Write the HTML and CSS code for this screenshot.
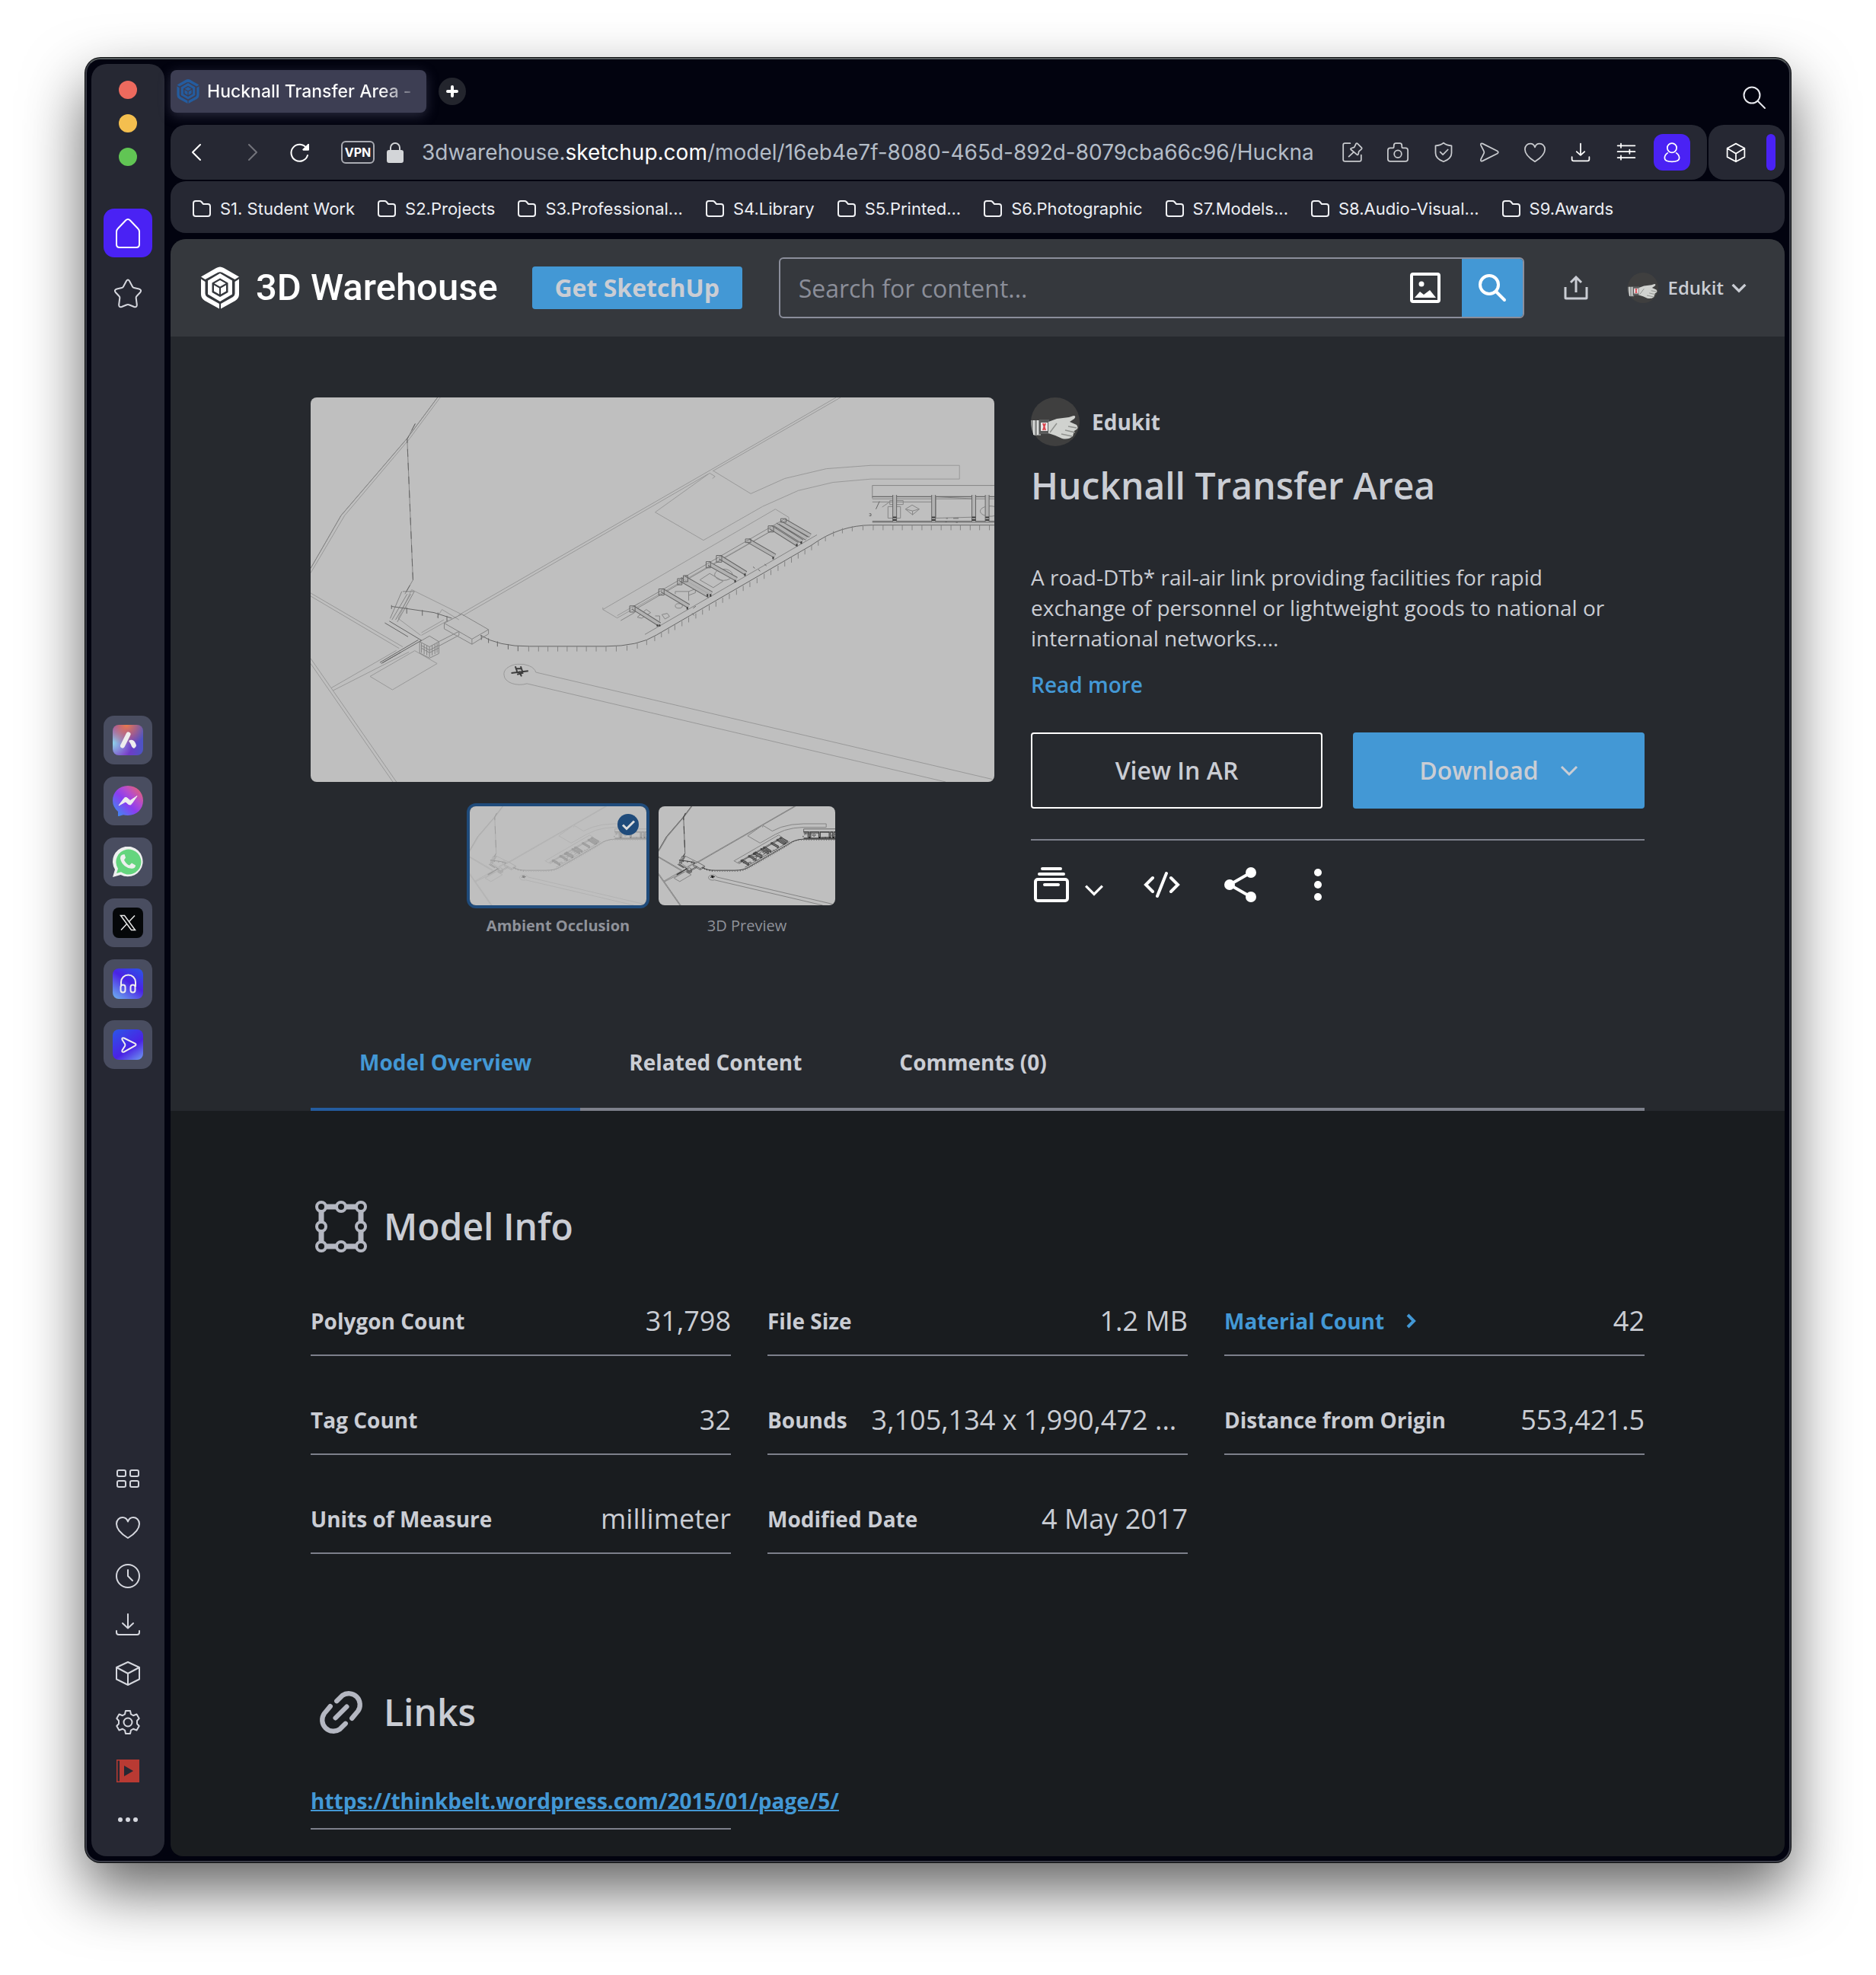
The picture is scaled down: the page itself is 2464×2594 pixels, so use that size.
FILE: index.html
```html
<!DOCTYPE html>
<html lang="en">
<head>
<meta charset="utf-8">
<title>Hucknall Transfer Area - 3D Warehouse</title>
<meta name="viewport" content="width=device-width, initial-scale=1">
<link rel="stylesheet" href="styles.css">
</head>
<body>
<svg class="defs" aria-hidden="true">
  <symbol id="folder" viewBox="0 0 26 24"><path d="M2 5v14q0 3 3 3h16q3 0 3-3V9q0-3-3-3h-6L12.500 3Q11.500 2 10 2H5Q2 2 2 5z"/></symbol>
  <symbol id="chevron-down" viewBox="0 0 24 16"><path d="M2 3l10 10L22 3"/></symbol>
  <symbol id="heart" viewBox="0 0 32 32"><path d="M16 30C12 27.500 1 21 1 11.500 1 6 5 3 9 3c3.500 0 6 2.500 7 5.500C17 5.500 19.500 3 23 3c4 0 8 3 8 8.500C31 21 20 27.500 16 30z"/></symbol>
  <symbol id="download" viewBox="0 0 32 32"><path d="M16 2v18M9 14l7 6.500 7-6.500M1 24v2q0 3 3 3h24q3 0 3-3v-2"/></symbol>
  <symbol id="cube" viewBox="0 0 32 32"><path d="M16 1l15 7v15.500L16 31 1 23.500V8zM1 8l15 8 15-8M16 16v15"/></symbol>
  <symbol id="send" viewBox="0 0 32 32"><path d="M6 3L28 14q3 2 0 4L6 29q-3.500 1-2.500-2.500L8 17.500q.8-1.500 0-3L3.500 5.500Q2.500 2 6 3z"/></symbol>
  <symbol id="logo" viewBox="0 0 50 55">
    <path d="M0 13L20 1.500q5-3 10 0L50 13l-5.500 3.500L28 7.500q-3-1.500-6 0L5.500 16.500z"/>
    <path d="M0 16l5.500 3.500V35q0 3 2.500 4.500L24 48.500V55L5 44.500Q0 41.500 0 36z"/>
    <path d="M50 16l-5.500 3.500V35q0 3-2.500 4.500L26 48.500V55l19-10.500q5-3 5-8.500z"/>
    <path fill-rule="evenodd" d="M25 8.500L41 18v18L25 45.500 9 36V18zM25 15l-10.500 6v12.500L25 39.500l10.500-6V21z"/>
    <path d="M25 17.500l7.500 4.200L25 26l-7.500-4.300zM17 24l7 4v8l-7-4zM33 24l-7 4v8l7-4z"/>
  </symbol>
  <symbol id="hand" viewBox="0 0 64 64">
    <circle cx="32" cy="32" r="32" fill="#3f3f3f"/>
    <path d="M0 30h13v20H4Q0 42 0 30z" fill="#8d8f8e"/>
    <path d="M4 30v19M9 30v19" stroke="#dcdedd" stroke-width="2"/>
    <path d="M11 29h13v19H11z" fill="#5a5b5b"/><path d="M13 33h9v11h-9z" fill="#e9e5e6"/>
    <path d="M16 34l3 9M19 34l-3 9" stroke="#d8434c" stroke-width="2"/>
    <path d="M23 32l11-4 16-2 6-2q4 0 1 4l-6 4 9 4q3 4 0 6l-3 2-2 7q-6 5-14 3l-9-4-9-3z" fill="#d0d2cf"/>
    <path d="M49 38l11 2M45 43l13 3M40 48l14 3M34 34l-9 12" stroke="#8f918e" stroke-width="1.500" fill="none"/>
  </symbol>
  <symbol id="plan" viewBox="14 36 1530 1494" preserveAspectRatio="none">
    <g class="plan-faint">
      <path d="M298 36L230 195 82 495 14 700M304 36L236 195 90 495 14 718"/>
      <path d="M1190 36L905 322 345 882M1200 36L914 322M903 334L355 884"/>
      <path d="M907 330l12 13-6 8M907 330L785 482l108 109 132-131 80-62 78-32 85-13h198v-53h-198l-100 13-93 38-76 59-84-89"/>
      <path d="M668 860L1054 470l30 32v14L700 893zM668 852v8M700 884l50-50"/>
      <path d="M14 796l206 209M14 808l198 203M14 1050l46 115 146 365M14 1070l184 460M60 1165l146-146M64 1175l170-150M262 950l50-50M262 960l60-58"/>
      <path d="M297 1070L197 1172l-50-52 100-100zM240 783l112 96M240 783l-30 112 50 65M308 860l38 40M297 890l11-30"/>
      <path d="M447 1116a35 37 0 0 1 71-12L1540 1520M447 1116a35 37 0 0 0 51 32L1435 1530"/>
    </g>
    <g class="plan-mid">
      <path d="M298 36L230 195 82 495 14 700M248 138l-18 60 13 547-18 55"/>
      <path d="M352 878l60 60v17l-37 40-62-60v-22zM412 938l-37 37v20M375 975l-62-62"/>
      <path d="M258 985l22-22 21 22v46l-21 18-22-20zM258 985l22 20 21-20M280 1005v40M262 1000l18 18 20-18M262 1010l18 18 20-18M262 990v38M268 996v38M274 1000v38M286 1000v38M292 995v38M297 990v38"/>
      <path d="M301 985l45-40v15l-45 42M220 790h26l-38 118M218 790l-26 105M230 800l-34 100M238 800l-34 100"/>
      <path d="M735 850L1075 508M735 865l340-340M708 903l30-30M762 957l385-387"/>
      <path d="M885 745l22-25 30 30-22 25zM830 800v-10h30v35M745 890l20-30 10 12-20 22zM785 885h10v20M800 880l12-5 5 12-10 10zM860 790l15-10v15l-15 10z"/>
      <ellipse cx="938" cy="725" rx="20" ry="22"/><ellipse cx="838" cy="846" rx="8" ry="9"/>
      <path d="M1544 378h-273v50M1271 421h273M1271 430h273M1271 442h135M1310 437h30v15h-30zM1306 460h28v45h-28zM1345 470l15-16 16 16-15 22zM1345 470l16 7 15-7M1361 477v15M1413 421v84l86-4M1413 422l86 8M1293 462l15-18"/>
      <path d="M1544 460a22 20 0 1 0 0 36"/>
    </g>
    <g class="plan-dark">
      <path d="M248 138l-18 60 13 547-18 55" stroke-dasharray="10 8"/>
      <path d="M180 912l52 54M190 905l72 75-88 88M255 978l-86 88M172 1070l44-44"/>
      <path d="M195 848l95 24 40 22M195 843v15M229 852v24M264 862v22M299 872v22M319 885v20"/>
      <path d="M1271 517h273M1271 521h273M1271 422h273"/>
      <path d="M394 960q40 44 110 43h170q74 0 114-44L1135 610q62-78 135-78h274"/>
      <path d="M396 960v18M412 972v18M432 984v20M456 995v20M478 1002v20"/>
      <path d="M1279 470l8-30M1264 488h4v8h-4M1436 506h4M1434 519h4M1452 506h12M1458 522h4M868 875l4 8M870 855l6-8M1004 694l4 6M1016 705l4 6M1030 684l4 6"/>
    </g>
    <g class="plan-ticks">
      <path d="M502 1003v20M524 1003v20M545 1003v20M567 1003v20M588 1003v20M610 1003v20M631 1003v20M653 1003v20M675 1003v20M698 1003v20M722 1000v20M745 992v20M766 978v20M784 963v20M799 948v20M815 934v20M829 920v20M845 905v20M860 890v20M876 875v20M891 860v20M906 844v20M921 829v20M936 814v20M951 799v20M967 783v20M982 768v20M997 753v20M1013 738v20M1029 721v20M1044 706v20M1060 690v20M1075 673v20M1090 658v20M1105 642v20M1120 626v20M1135 610v20M1150 592v20M1166 575v20M1184 556v20M1204 544v20M1226 536v20M1250 532v20M1273 532v20M1295 532v20M1317 532v20M1338 532v20M1360 532v20M1382 532v20M1403 532v20M1425 532v20M1447 532v20M1468 532v20M1490 532v20M1511 532v20M1533 532v20"/>
    </g>
    <g class="plan-beam">
      <path d="M735 852l60 66M800 785l60 62M841 742l66 66M849 736l62 62M905 682l62 60M930 657l58 62M993 592l60 60M1043 540l60 66M1054 530l60 66M1064 522l60 62M1074 515l58 58M1321 415v104M1408 415v104M1498 415v104M1528 415v104"/>
    </g>
    <g class="plan-beam-core">
      <path d="M735 852l60 66M800 785l60 62M841 742l66 66M849 736l62 62M905 682l62 60M930 657l58 62M993 592l60 60M1043 540l60 66M1054 530l60 66M1064 522l60 62M1074 515l58 58M1321 415v104M1408 415v104M1498 415v104M1528 415v104"/>
    </g>
    <g class="plan-dark">
      <path d="M728 846h12v24h-12zM793 780h12v24h-12zM835 740h10v24h-10zM848 728h10v24h-10zM899 674h10v24h-10zM922 650h12v26h-12zM987 586h12v14h-12zM1038 535h12v24h-12zM1066 507h12v14h-12z"/>
    </g>
    <g class="plan-black">
      <path d="M472 1081l4 20M484 1081l4 20M474 1090h12M463 1107l38-8M480 1100l6 20M476 1112l14-6"/>
      <path d="M790 918v8M795 918v8M857 850v10M902 800v10M909 800v10M964 745v10M986 720v10M1049 655v10M1102 605v10M1112 595v10M1317 502h8M1317 512h8M1404 502h8M1404 512h8M1494 502h8M1494 512h8M1524 502h8M1524 512h8"/>
    </g>
  </symbol>
</svg>

<div class="window">
  <nav class="rail" aria-label="Browser sidebar">
    <div class="rail-top">
      <div class="lights"><span class="light light-red"></span><span class="light light-amber"></span><span class="light light-green"></span></div>
      <button class="rail-btn rail-home" aria-label="Home"><svg class="ic" viewBox="0 0 32 40"><path d="M13 3.500q3-3 6 0L29 14q2 2 2 4.500V35q0 4-4 4H5q-4 0-4-4V18.500Q1 16 3 14z"/></svg></button>
      <button class="rail-btn" aria-label="Pinboards"><svg class="ic ic-star" viewBox="0 0 36 40"><path d="M16 3q2-3 4 0l4 7.500q.6 1.200 2 1.500l6.500 1.500q4 1.200 1.700 4.500L29.500 23q-1 1-.8 2.500l1.100 8.500q.2 4-3.600 3L20 34.500q-2-.8-4 0L9.800 37q-3.800 1-3.600-3l1.100-8.500Q7.500 24 6.500 23L1.800 18q-2.300-3.300 1.700-4.500L10 12q1.400-.3 2-1.500z"/></svg></button>
    </div>
    <div class="rail-apps">
      <button class="tile" aria-label="Aria"><span class="app app-aria"><svg viewBox="0 0 40 40"><path d="M20.500 12.500L13 27.500" stroke="#eee" stroke-width="6" stroke-linecap="round"/><path d="M21 21q7-4 10 6 0 2-3 4-3-1-4-5-1-2-3-5z" fill="#eee"/></svg></span></button>
      <button class="tile" aria-label="Messenger"><span class="app"><svg viewBox="0 0 40 40"><defs><linearGradient id="mg" x1="0" y1="1" x2="1" y2="0"><stop offset="0" stop-color="#2f9bf0"/><stop offset=".45" stop-color="#8a3df0"/><stop offset=".65" stop-color="#b44bd0"/><stop offset="1" stop-color="#f26a55"/></linearGradient></defs><path d="M20 0c11.500 0 20 8.300 20 19.500S31.500 39 20 39q-3.500 0-6-.8L8 40q-1 .3-1-1v-5Q0 28 0 19.500C0 8.300 8.500 0 20 0z" fill="url(#mg)"/><path d="M8 26l7-9.500q1.500-2 4-.5l4 3.500 9-6-7 10q-1.500 2.500-4 1l-4-3.500z" fill="#eee" stroke="#eee" stroke-linejoin="round"/></svg></span></button>
      <button class="tile" aria-label="WhatsApp"><span class="app"><svg viewBox="0 0 40 40"><path d="M0 40l3-10A19.800 19.800 0 1 1 10.500 37z" fill="#eef0ef"/><path d="M5 35l2-6A16.500 16.500 0 1 1 11 33.300z" fill="#64d57e"/><path d="M13 10.500q-3 1-3 5 1 6 6 10t11 3q3-1 3-4l-5-3-3 3q-4-1-7-7l2-3-1.500-4.500z" fill="#eef0ef"/></svg></span></button>
      <button class="tile" aria-label="X"><span class="app app-x"><svg viewBox="0 0 40 40" fill="none" stroke="#e8e8e8" stroke-width="1.500"><path d="M10.500 10.500h5L29.500 29.500h-5zM29 10.500l-8 8.500M11 29.500l8-8.500"/></svg></span></button>
      <button class="tile" aria-label="Player"><span class="app app-player"><svg viewBox="0 0 40 40" fill="none" stroke="#eee" stroke-width="2"><path d="M11 24v-6a9.500 9.500 0 0 1 19 0v6"/><rect x="10.500" y="21.500" width="6" height="10" rx="3"/><rect x="23.500" y="21.500" width="6" height="10" rx="3"/></svg></span></button>
      <button class="tile" aria-label="Flow"><span class="app app-flow"><svg viewBox="0 0 40 40" fill="none" stroke="#eee" stroke-width="2"><path d="M15 11.500l14.500 7q2 1.500 0 3L15 29.500q-3.500 1-2.500-2L16 22q.8-1.500 0-3l-3.500-5.500q-1-3 2.500-2z"/></svg></span></button>
    </div>
    <div class="rail-bottom">
      <button class="rail-btn" aria-label="Workspaces"><svg class="ic" viewBox="0 0 32 32"><rect x="2" y="5" width="11" height="8" rx="2"/><rect x="19" y="5" width="11" height="8" rx="2"/><rect x="2" y="19" width="11" height="8" rx="2"/><rect x="19" y="19" width="11" height="8" rx="2"/></svg></button>
      <button class="rail-btn" aria-label="Bookmarks"><svg class="ic"><use href="#heart"/></svg></button>
      <button class="rail-btn" aria-label="History"><svg class="ic" viewBox="0 0 32 32"><circle cx="16" cy="16" r="15"/><path d="M16 8v8l6 6"/></svg></button>
      <button class="rail-btn" aria-label="Downloads"><svg class="ic"><use href="#download"/></svg></button>
      <button class="rail-btn" aria-label="Extensions"><svg class="ic"><use href="#cube"/></svg></button>
      <button class="rail-btn" aria-label="Settings"><svg class="ic" viewBox="0 0 32 32"><path d="M13 1h6l1 4.500 3 1.700L27.500 5.500l3.200 5.500L28 14v4l2.700 3-3.200 5.500-4.500-1.700-3 1.700L19 31h-6l-1-4.500-3-1.700-4.500 1.700L1.300 21 4 18v-4L1.300 11l3.200-5.500L9 7.200l3-1.700z"/><circle cx="16" cy="16" r="5.500"/></svg></button>
      <button class="rail-btn" aria-label="Video"><svg class="ic-solid" viewBox="0 0 32 32"><path d="M1 1h30v30H1z" fill="#b93a33"/><path d="M2.500 2.500h2.500v27H2.500zM11 9l12 7-12 7z" fill="#262833"/></svg></button>
      <button class="rail-btn" aria-label="More"><svg class="ic-solid" viewBox="0 0 32 32" fill="#d5d7de"><circle cx="6" cy="16" r="3"/><circle cx="16" cy="16" r="3"/><circle cx="26" cy="16" r="3"/></svg></button>
    </div>
  </nav>

  <div class="browser">
    <div class="tabstrip">
      <div class="tab"><svg class="favicon"><use href="#logo"/></svg><span class="tab-title">Hucknall Transfer Area -</span></div>
      <button class="new-tab" aria-label="New tab"><svg viewBox="0 0 36 36"><path d="M18 12v12M12 18h12" stroke="#fff" stroke-width="4" stroke-linecap="round"/></svg></button>
      <button class="tab-search" aria-label="Search tabs"><svg class="ic" viewBox="0 0 32 32"><circle cx="13" cy="13" r="10.500"/><path d="M21 21l9 9"/></svg></button>
    </div>

    <div class="toolbar-row">
      <div class="toolbar">
        <button class="nav-btn nav-back" aria-label="Back"><svg class="ic" viewBox="0 0 32 32"><path d="M21 6L11 16l10 10"/></svg></button>
        <button class="nav-btn nav-forward" aria-label="Forward" disabled><svg class="ic" viewBox="0 0 32 32"><path d="M11 6l10 10-10 10"/></svg></button>
        <button class="nav-btn nav-reload" aria-label="Reload"><svg class="ic" viewBox="0 0 32 32"><path d="M26 20a11 11 0 1 1-1.500-9.500M27 6v6.500h-6.500"/><path d="M27 6v6.500h-6.500z" fill="#fff"/></svg></button>
        <button class="vpn">VPN</button>
        <svg class="lock" viewBox="0 0 22 28"><rect y="11" width="22" height="17" rx="3" fill="#d3d5d8"/><path d="M5 12V8a6 6 0 0 1 12 0v4" fill="none" stroke="#d3d5d8" stroke-width="2"/></svg>
        <div class="url">3dwarehouse.<b>sketchup.com</b>/model/16eb4e7f-8080-465d-892d-8079cba66c96/Huckna</div>
        <div class="tools">
          <button class="tool dim" aria-label="Easy files"><svg class="ic" viewBox="0 0 32 32"><path d="M13 2.500H5Q2.500 2.500 2.500 5v22q0 2.500 2.500 2.500h22q2.500 0 2.500-2.500v-7M22 2.800q1-.8 2 .1l6 6q1 1 0 2.300l-4 3.500-.8 4q-.5 2-2 .8l-9-7.500q-1.200-1.200.5-2l4.500-1.500zM17.500 16.500L11 22.500"/></svg></button>
          <button class="tool dim" aria-label="Snapshot"><svg class="ic" viewBox="0 0 32 32"><path d="M1 13q0-3.500 3.500-3.500h4Q10 9.500 10 8V6q0-3.500 3-3.500h6q3 0 3 3.500v2q0 1.500 1.500 1.500h4Q31 9.500 31 13v13q0 3.500-3.500 3.500h-23Q1 29.500 1 26z"/><circle cx="16" cy="18.500" r="5.500"/></svg></button>
          <button class="tool dim" aria-label="Ad blocker"><svg class="ic" viewBox="0 0 32 32"><path d="M16 2q5 4 12 4v11q0 8.500-12 13Q4 25.500 4 17V6q7 0 12-4z"/><path d="M11 15.500l4 4 7.500-7.500"/></svg></button>
          <button class="tool dim" aria-label="Send"><svg class="ic"><use href="#send"/></svg></button>
          <button class="tool dim" aria-label="Favourite"><svg class="ic"><use href="#heart"/></svg></button>
          <button class="tool" aria-label="Downloads"><svg class="ic" viewBox="0 0 32 32"><path d="M16 3v17M10 15l6 5.500 6-5.500M3 23v3.500q0 2.500 2.500 2.500h21q2.500 0 2.500-2.500V23"/></svg></button>
          <button class="tool" aria-label="Easy setup"><svg class="ic" viewBox="0 0 32 32"><path d="M3 6h26M3 15h26M3 24h26M8 3v6M21 12v6M8 21v6"/></svg></button>
          <button class="tool tool-user" aria-label="Profile"><svg class="ic" viewBox="0 0 32 32"><circle cx="16" cy="9.500" r="7"/><path d="M9.500 17Q5 20 5 24.500 5 30 16 30t11-5.500Q27 20 22.500 17"/></svg></button>
        </div>
      </div>
      <div class="ext"><button class="tool" aria-label="Extensions"><svg class="ic" viewBox="0 0 32 32"><path d="M16 3l13 7v13l-13 7-13-7V10zM3 10l13 8 13-8M16 18v12"/></svg></button><span class="ext-bar"></span></div>
    </div>

    <nav class="bookmarks" aria-label="Bookmarks">
      <a class="bookmark" href="#"><svg class="folder"><use href="#folder"/></svg>S1. Student Work</a>
      <a class="bookmark" href="#"><svg class="folder"><use href="#folder"/></svg>S2.Projects</a>
      <a class="bookmark" href="#"><svg class="folder"><use href="#folder"/></svg>S3.Professional...</a>
      <a class="bookmark" href="#"><svg class="folder"><use href="#folder"/></svg>S4.Library</a>
      <a class="bookmark" href="#"><svg class="folder"><use href="#folder"/></svg>S5.Printed...</a>
      <a class="bookmark" href="#"><svg class="folder"><use href="#folder"/></svg>S6.Photographic</a>
      <a class="bookmark" href="#"><svg class="folder"><use href="#folder"/></svg>S7.Models...</a>
      <a class="bookmark" href="#"><svg class="folder"><use href="#folder"/></svg>S8.Audio-Visual...</a>
      <a class="bookmark" href="#"><svg class="folder"><use href="#folder"/></svg>S9.Awards</a>
    </nav>

    <div class="page">
      <header class="site-header">
        <a class="brand" href="#"><svg class="brand-mark"><use href="#logo"/></svg>3D Warehouse</a>
        <button class="get">Get SketchUp</button>
        <form class="search">
          <input class="search-input" type="text" placeholder="Search for content..." aria-label="Search for content">
          <button class="search-image" type="button" aria-label="Search by image"><svg viewBox="0 0 40 40"><path fill-rule="evenodd" fill="#fff" d="M4 0h32q4 0 4 4v32q0 4-4 4H4q-4 0-4-4V4q0-4 4-4zM4 4v32h32V4z"/><circle cx="15" cy="15" r="3.500" fill="#fff"/><path d="M6 33l7-8 5 4 8-6 8 10z" fill="#fff"/></svg></button>
          <button class="search-go" type="submit" aria-label="Search"><svg viewBox="0 0 40 40" fill="none" stroke="#fff" stroke-width="4" stroke-linecap="round"><circle cx="16" cy="16" r="12"/><path d="M25 25l11 11"/></svg></button>
        </form>
        <button class="upload" aria-label="Upload"><svg viewBox="0 0 32 32" fill="none" stroke="#c9ccd3" stroke-width="3"><path d="M16 22V3M9 9l7-7 7 7M2 15v14q0 1 1 1h26q1 0 1-1V15"/></svg></button>
        <button class="account"><svg class="account-pic"><use href="#hand"/></svg>Edukit<svg class="account-chev"><use href="#chevron-down"/></svg></button>
      </header>

      <section class="hero">
        <div class="hero-grid">
          <div class="gallery">
            <svg class="preview" role="img" aria-label="Model preview"><use href="#plan"/></svg>
            <div class="thumbs">
              <button class="thumb thumb-on"><span class="thumb-frame"><svg class="thumb-pic thumb-soft"><use href="#plan"/></svg><svg class="check" viewBox="0 0 28 28"><circle cx="14" cy="14" r="14" fill="#1f4b7b"/><path d="M7 14.500l5 5 10-10" fill="none" stroke="#ddd" stroke-width="3"/></svg></span>Ambient Occlusion</button>
              <button class="thumb"><span class="thumb-frame"><svg class="thumb-pic thumb-hard"><use href="#plan"/></svg></span>3D Preview</button>
            </div>
          </div>
          <div class="details">
            <a class="author" href="#"><svg class="author-pic"><use href="#hand"/></svg>Edukit</a>
            <h1 class="title">Hucknall Transfer Area</h1>
            <p class="desc">A road-DTb* rail-air link providing facilities for rapid exchange of personnel or lightweight goods to national or international networks....</p>
            <a class="more" href="#">Read more</a>
            <div class="actions">
              <button class="btn btn-outline">View In AR</button>
              <button class="btn btn-fill">Download<svg class="btn-chev"><use href="#chevron-down"/></svg></button>
            </div>
            <div class="icons">
              <button class="icon-btn icon-collect" aria-label="Add to collection"><svg class="i-collect" viewBox="0 0 46 46"><rect x="2" y="16" width="42" height="28" rx="3" fill="none" stroke="#fff" stroke-width="4"/><path d="M7 9h32M11 2h24M14 23h18" stroke="#fff" stroke-width="4" stroke-linecap="round"/></svg><svg class="i-chev"><use href="#chevron-down"/></svg></button>
              <button class="icon-btn icon-code" aria-label="Embed"><svg class="i-wide" viewBox="0 0 48 36" fill="none" stroke="#fff" stroke-width="4" stroke-linecap="round"><path d="M12 9l-9 9 9 9M36 9l9 9-9 9M30 3L18 33"/></svg></button>
              <button class="icon-btn icon-share" aria-label="Share"><svg class="i-share" viewBox="0 0 42 46"><path d="M35 7L7 23l28 16" fill="none" stroke="#fff" stroke-width="4"/><circle cx="35" cy="7" r="7" fill="#fff"/><circle cx="7" cy="23" r="7" fill="#fff"/><circle cx="35" cy="39" r="7" fill="#fff"/></svg></button>
              <button class="icon-btn" aria-label="More options"><svg class="i-dots" viewBox="0 0 10 42" fill="#fff"><circle cx="5" cy="5" r="5"/><circle cx="5" cy="21" r="5"/><circle cx="5" cy="37" r="5"/></svg></button>
            </div>
          </div>
        </div>
        <nav class="tabs" aria-label="Model sections">
          <a class="tab-link tab-on" href="#">Model Overview</a>
          <a class="tab-link" href="#">Related Content</a>
          <a class="tab-link" href="#">Comments (0)</a>
        </nav>
      </section>

      <main class="body">
        <h2 class="heading"><svg class="heading-ic" viewBox="0 0 80 80" fill="none" stroke="#b4b7c1"><path d="M14 14h52v52H14z" stroke-width="7"/><g fill="#191c1f" stroke-width="4"><circle cx="14" cy="14" r="6"/><circle cx="40" cy="14" r="6"/><circle cx="66" cy="14" r="6"/><circle cx="14" cy="40" r="6"/><circle cx="66" cy="40" r="6"/><circle cx="14" cy="66" r="6"/><circle cx="40" cy="66" r="6"/><circle cx="66" cy="66" r="6"/></g></svg>Model Info</h2>
        <dl class="facts">
          <div class="fact"><dt>Polygon Count</dt><dd>31,798</dd></div>
          <div class="fact"><dt>File Size</dt><dd>1.2 MB</dd></div>
          <div class="fact"><dt><a class="fact-link" href="#">Material Count<svg class="fact-chev" viewBox="0 0 14 22"><path d="M3 3l8 8-8 8"/></svg></a></dt><dd>42</dd></div>
          <div class="fact"><dt>Tag Count</dt><dd>32</dd></div>
          <div class="fact fact-long"><dt>Bounds</dt><dd>3,105,134 x 1,990,472 ...</dd></div>
          <div class="fact"><dt>Distance from Origin</dt><dd>553,421.5</dd></div>
          <div class="fact"><dt>Units of Measure</dt><dd>millimeter</dd></div>
          <div class="fact"><dt>Modified Date</dt><dd>4 May 2017</dd></div>
        </dl>
        <h2 class="heading heading-links"><svg class="heading-ic" viewBox="2 2 76 76" fill="none" stroke="#b4b7c1" stroke-width="6" stroke-linecap="round"><path d="M33 47L47 33M34.500 26l7-7a14 14 0 0 1 19.500 19.500l-7.500 9M26.500 32.500L19 41.500a14 14 0 0 0 19.500 19.500l7-7"/></svg>Links</h2>
        <div class="links"><div class="link-cell"><a class="ext-link" href="https://thinkbelt.wordpress.com/2015/01/page/5/">https://thinkbelt.wordpress.com/2015/01/page/5/</a></div></div>
      </main>
    </div>
  </div>
</div>
</body>
</html>
```
FILE: styles.css
```css
* { box-sizing: border-box; }

body {
  margin: 0;
  min-height: 100vh;
  display: flex;
  padding: 76px 112px 148px;
  background: #fff;
  font-family: "Open Sans", sans-serif;
  color: #cacdd4;
}

button {
  margin: 0;
  padding: 0;
  border: 0;
  background: none;
  color: inherit;
  font: inherit;
  cursor: pointer;
}

a { color: inherit; text-decoration: none; }
svg { display: block; flex: none; }
.defs { position: absolute; width: 0; height: 0; }

.ic {
  width: 32px;
  height: 32px;
  fill: none;
  stroke: currentColor;
  stroke-width: 2;
  stroke-linejoin: round;
  stroke-linecap: round;
}
.ic-solid { width: 32px; height: 32px; }

/* Browser window */
.window {
  flex: 1;
  min-width: 0;
  display: flex;
  gap: 8px;
  padding: 6px;
  border: 2px solid #3b3d47;
  border-top-color: #565c5d;
  border-radius: 20px;
  background: #02030f;
  box-shadow: 0 0 0 1px #0a0c0d, 0 36px 80px rgba(0, 0, 0, .62);
}

.rail {
  flex: none;
  width: 96px;
  display: flex;
  flex-direction: column;
  justify-content: space-between;
  align-items: center;
  padding: 22px 0 16px;
  border-radius: 20px;
  background: #262833;
  color: #d5d7de;
}
.rail-top { display: flex; flex-direction: column; align-items: center; gap: 16px; padding-bottom: 16px; }
.lights { display: flex; flex-direction: column; gap: 20px; margin-bottom: 40px; }
.light { width: 24px; height: 24px; border-radius: 50%; }
.light-red { background: #ed6a5e; }
.light-amber { background: #f4bf4f; }
.light-green { background: #61c554; }
.rail-btn { width: 64px; height: 64px; display: flex; align-items: center; justify-content: center; }
.rail-home { border-radius: 14px; background: #4a22f4; color: #fff; }
.rail-home .ic { height: 40px; }
.ic-star { width: 36px; height: 40px; }
.rail-apps { display: flex; flex-direction: column; gap: 16px; }
.rail-bottom { display: flex; flex-direction: column; }
.tile {
  width: 64px;
  height: 64px;
  display: flex;
  align-items: center;
  justify-content: center;
  border-radius: 14px;
  background: #494d60;
}
.app { width: 40px; height: 40px; border-radius: 8px; }
.app-aria {
  background:
    radial-gradient(circle at 45% 0, #e77c4c, transparent 60%),
    radial-gradient(circle at 0 60%, #8ed4e8, transparent 55%),
    linear-gradient(90deg, #7b33c8 40%, #4b55c4);
}
.app-x { background: #050709; }
.app-player { background: linear-gradient(35deg, #6fb4f0, #4a22e4 55%, #2b57e8); }
.app-flow { background: linear-gradient(145deg, #2b57e8, #4a22e4 60%, #6f9cf0); }

.browser { flex: 1; min-width: 0; display: flex; flex-direction: column; }

.tabstrip {
  display: flex;
  align-items: center;
  padding: 8px 24px 16px 0;
  font-family: Inter, sans-serif;
}
.tab {
  width: 336px;
  height: 56px;
  display: flex;
  align-items: center;
  gap: 10px;
  padding: 0 8px;
  border-radius: 8px;
  background: #3d3e53;
  box-shadow: 0 4px 16px rgba(90, 90, 120, .45);
}
.favicon { width: 30px; height: 32px; fill: #245c9f; }
.tab-title {
  white-space: nowrap;
  font-size: 23px;
  line-height: 32px;
  font-weight: 500;
  background: linear-gradient(90deg, #fff 85%, #6d6e7e);
  -webkit-background-clip: text;
  background-clip: text;
  color: transparent;
}
.new-tab { width: 36px; height: 36px; margin-left: 16px; border-radius: 50%; background: #23252d; }
.tab-search { align-self: flex-end; margin-left: auto; height: 40px; display: flex; align-items: center; color: #e8e9ee; }

.toolbar-row { display: flex; gap: 2px; }
.toolbar {
  flex: 1;
  min-width: 0;
  height: 72px;
  display: flex;
  align-items: center;
  padding: 0 22px 0 18px;
  border-radius: 20px;
  background: #262833;
  font-family: Inter, sans-serif;
  color: #fff;
}
.nav-back { margin-right: 42px; }
.nav-forward { margin-right: 30px; opacity: .35; }
.nav-reload { margin-right: 38px; }
.vpn {
  width: 44px;
  height: 30px;
  margin-right: 16px;
  border: 2px solid #a9abb2;
  border-radius: 6px;
  font-size: 16px;
  line-height: 26px;
  font-weight: 700;
}
.lock { width: 22px; height: 28px; margin-right: 24px; }
.url {
  flex: 1;
  white-space: nowrap;
  font-size: 28px;
  line-height: 40px;
  color: #b3bcc7;
}
.url b { font-weight: 400; color: #fff; }
.tools { display: flex; gap: 12px; margin-left: 16px; }
.tool { width: 48px; height: 48px; display: flex; align-items: center; justify-content: center; color: #fff; }
.dim { color: #c9cbcf; }
.tool .ic { width: 28px; height: 28px; }
.tool-user { border-radius: 12px; background: #4a22f4; }
.ext {
  width: 100px;
  display: flex;
  align-items: center;
  justify-content: space-between;
  padding: 0 12px;
  border-radius: 20px;
  background: #262833;
}
.ext-bar { width: 12px; height: 48px; border-radius: 6px; background: #4a22f4; }

.bookmarks {
  height: 68px;
  display: flex;
  align-items: center;
  gap: 29px;
  margin: 2px 0 8px;
  padding: 4px 28px 0;
  border-radius: 20px;
  background: #262833;
  overflow: hidden;
  font-family: Inter, sans-serif;
  font-size: 22px;
  line-height: 32px;
  color: #eceef3;
}
.bookmark { display: flex; align-items: center; gap: 11px; white-space: nowrap; }
.folder { width: 26px; height: 24px; fill: none; stroke: #f1f2f5; stroke-width: 2; stroke-linejoin: round; }

/* Web page */
.page {
  flex: 1;
  display: flex;
  flex-direction: column;
  overflow: hidden;
  border-radius: 20px 20px 16px 16px;
  background: #191c1f;
}
.site-header {
  height: 128px;
  display: flex;
  align-items: center;
  padding: 0 50px 0 40px;
  background: #35383d;
}
.brand {
  display: flex;
  align-items: center;
  gap: 22px;
  font-family: Roboto, sans-serif;
  font-size: 49px;
  line-height: 56px;
  font-weight: 500;
  color: #fff;
  white-space: nowrap;
}
.brand-mark { width: 50px; height: 56px; fill: #fff; }
.get {
  width: 276px;
  height: 56px;
  margin: 0 48px 0 45px;
  border-radius: 4px;
  background: #4398d5;
  font-size: 32px;
  line-height: 56px;
  font-weight: 700;
}
.search {
  flex: 1;
  height: 80px;
  display: flex;
  align-items: center;
  overflow: hidden;
  border: 2px solid #8b8e9b;
  border-radius: 6px;
}
.search-input {
  flex: 1;
  min-width: 0;
  height: 76px;
  padding: 0 24px;
  border: 0;
  outline: 0;
  background: none;
  color: inherit;
  font: 32px/44px "Open Sans", sans-serif;
}
.search-input::placeholder { color: #8b8e99; opacity: 1; }
.search-image { width: 40px; height: 40px; margin-right: 28px; }
.search-go {
  width: 80px;
  height: 76px;
  display: flex;
  align-items: center;
  justify-content: center;
  background: #4398d5;
}
.search-go svg { width: 40px; height: 40px; }
.upload { width: 32px; height: 32px; margin: 0 52px; }
.account { display: flex; align-items: center; font-size: 24px; line-height: 32px; font-weight: 600; }
.account-pic { width: 40px; height: 40px; margin-right: 12px; }
.account-chev { width: 20px; height: 14px; margin-left: 10px; fill: none; stroke: #cacdd4; stroke-width: 4; }

.hero { padding: 80px 184px 0; background: #26292e; }
.hero-grid { display: grid; grid-template-columns: 449fr 403fr; gap: 48px; }
.preview { width: 100%; aspect-ratio: 898 / 505; border-radius: 8px; background: #bfbfbf; }

/* Line drawing of the model, toned by the frame that shows it */
#plan g { fill: none; }
#plan path, #plan ellipse { vector-effect: non-scaling-stroke; }
.plan-faint { stroke: var(--plan-faint); }
.plan-mid, .plan-ticks { stroke: var(--plan-mid); }
.plan-dark { stroke: var(--plan-dark); }
.plan-beam { stroke: var(--plan-dark); stroke-width: var(--plan-beam); }
.plan-beam-core { stroke: var(--plan-fill); stroke-width: var(--plan-core); }
.plan-black { stroke: var(--plan-black); stroke-width: var(--plan-pen); }
.preview {
  --plan-faint: #999;
  --plan-mid: #858585;
  --plan-dark: #666;
  --plan-fill: #b2b2b2;
  --plan-black: #3c3c3c;
  --plan-beam: 6px;
  --plan-core: 4px;
  --plan-pen: 2px;
}
.thumb-soft {
  --plan-faint: #b3b3b3;
  --plan-mid: #adadad;
  --plan-dark: #9c9c9c;
  --plan-fill: #a8a8a8;
  --plan-black: #808080;
  --plan-beam: 3px;
  --plan-core: 1px;
  --plan-pen: 1px;
}
.thumb-hard {
  --plan-faint: #858585;
  --plan-mid: #6a6a6a;
  --plan-dark: #3f3f3f;
  --plan-fill: #8a8a8a;
  --plan-black: #111;
  --plan-beam: 3px;
  --plan-core: 1px;
  --plan-pen: 1px;
}

.thumbs { display: flex; justify-content: center; gap: 16px; margin-top: 32px; }
.thumb { font-size: 20px; line-height: 28px; color: #8f929a; }
.thumb-on { font-weight: 700; }
.thumb-frame { display: block; position: relative; margin-bottom: 13px; border-radius: 8px; }
.thumb-on .thumb-frame { box-shadow: 0 0 0 4px #1f4b7b; }
.thumb-pic { width: 232px; height: 130px; border-radius: 8px; background: #bfbfbf; }
.check { position: absolute; top: 10px; right: 10px; width: 28px; height: 28px; }

.author { display: flex; align-items: center; gap: 16px; font-size: 28px; line-height: 40px; font-weight: 700; }
.author-pic { width: 64px; height: 64px; }
.title { margin: 20px 0 68px; font-size: 48px; line-height: 64px; font-weight: 600; }
.desc { margin: 0 0 21px; padding-right: 40px; font-size: 28px; line-height: 40px; }
.more { display: block; font-size: 28px; line-height: 40px; font-weight: 600; color: #4398d5; }
.actions { display: grid; grid-template-columns: 1fr 1fr; gap: 40px; padding: 43px 0 40px; border-bottom: 2px solid #7d808b; }
.btn {
  height: 100px;
  display: flex;
  align-items: center;
  justify-content: center;
  border-radius: 4px;
  font-size: 32px;
  line-height: 44px;
  font-weight: 600;
}
.btn-outline { border: 2px solid #fff; }
.btn-fill { background: #4398d5; }
.btn-chev { width: 24px; height: 16px; margin-left: 28px; fill: none; stroke: #cacdd4; stroke-width: 3; }
.icons { display: flex; align-items: center; height: 52px; margin-top: 32px; padding-left: 4px; }
.icon-btn { display: flex; align-items: center; }
.icon-collect { margin-right: 52px; }
.icon-code { margin-right: 58px; }
.icon-share { margin-right: 76px; }
.i-collect { width: 46px; height: 46px; }
.i-chev { width: 26px; height: 18px; margin: 14px 0 0 20px; fill: none; stroke: #fff; stroke-width: 3; }
.i-wide { width: 48px; height: 36px; }
.i-share { width: 42px; height: 46px; }
.i-dots { width: 10px; height: 42px; }

.tabs { display: flex; margin-top: 105px; box-shadow: inset 0 -4px #7d808b; }
.tab-link { padding: 40px 64px; border-bottom: 4px solid transparent; font-size: 28px; line-height: 40px; font-weight: 700; }
.tab-on { border-color: #245c9f; color: #4398d5; }

.body { flex: 1; padding: 112px 184px 32px; }
.heading { display: flex; align-items: center; gap: 16px; margin: 0; font-size: 48px; line-height: 80px; font-weight: 600; }
.heading-ic { width: 80px; height: 80px; }
.heading-links { margin-top: 168px; }
.facts { display: grid; grid-template-columns: repeat(3, 1fr); gap: 60px 48px; margin: 60px 0 0; }
.fact {
  display: flex;
  align-items: center;
  justify-content: space-between;
  padding-bottom: 20px;
  border-bottom: 2px solid #7d808b;
  line-height: 48px;
  white-space: nowrap;
}
.fact dt { font-size: 28px; font-weight: 700; }
.fact dd { margin: 0; font-size: 36px; font-weight: 400; }
.fact-long dd { flex: 1; margin-left: 32px; }
.fact-link { display: flex; align-items: center; gap: 28px; color: #4398d5; }
.fact-chev { width: 14px; height: 22px; fill: none; stroke: #4398d5; stroke-width: 4; }
.links { display: grid; grid-template-columns: repeat(3, 1fr); gap: 48px; margin-top: 52px; }
.link-cell { min-width: 0; padding-bottom: 12px; border-bottom: 2px solid #7d808b; white-space: nowrap; }
.ext-link { font-size: 28px; line-height: 48px; font-weight: 700; color: #4398d5; text-decoration: underline; text-decoration-thickness: 2px; }
```
